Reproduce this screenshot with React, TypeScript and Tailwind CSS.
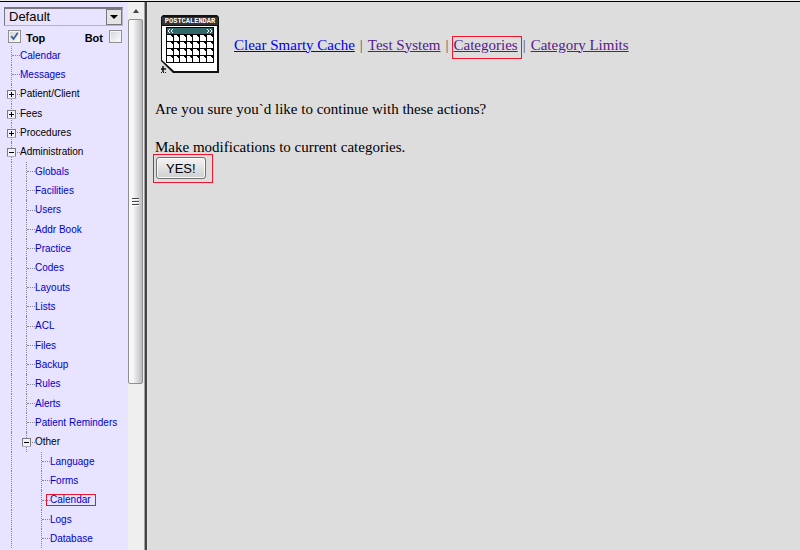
import { useState } from 'react';

type TreeItem = {
  label: string;
  level: 0 | 1 | 2;
  folder?: 'open' | 'closed';
  marked?: boolean;
};

const treeItems: TreeItem[] = [
  { label: 'Calendar', level: 0 },
  { label: 'Messages', level: 0 },
  { label: 'Patient/Client', level: 0, folder: 'closed' },
  { label: 'Fees', level: 0, folder: 'closed' },
  { label: 'Procedures', level: 0, folder: 'closed' },
  { label: 'Administration', level: 0, folder: 'open' },
  { label: 'Globals', level: 1 },
  { label: 'Facilities', level: 1 },
  { label: 'Users', level: 1 },
  { label: 'Addr Book', level: 1 },
  { label: 'Practice', level: 1 },
  { label: 'Codes', level: 1 },
  { label: 'Layouts', level: 1 },
  { label: 'Lists', level: 1 },
  { label: 'ACL', level: 1 },
  { label: 'Files', level: 1 },
  { label: 'Backup', level: 1 },
  { label: 'Rules', level: 1 },
  { label: 'Alerts', level: 1 },
  { label: 'Patient Reminders', level: 1 },
  { label: 'Other', level: 1, folder: 'open' },
  { label: 'Language', level: 2 },
  { label: 'Forms', level: 2 },
  { label: 'Calendar', level: 2, marked: true },
  { label: 'Logs', level: 2 },
  { label: 'Database', level: 2 }
];

function FolderToggle({ state, label }: { state: 'open' | 'closed'; label: string }) {
  return (
    <button type="button" aria-label={label} className="absolute -left-[5px] top-1/2 z-10 -translate-y-1/2">
      <svg width="9" height="9" viewBox="0 0 9 9" shapeRendering="crispEdges" className="block">
        <rect width="9" height="9" fill="#7b7b80" />
        <rect x="1" y="1" width="7" height="7" fill="#f3f1fb" />
        <rect x="2" y="4" width="5" height="1" fill="#000" />
        {state === 'closed' && <rect x="4" y="2" width="1" height="5" fill="#000" />}
      </svg>
    </button>
  );
}

function TreeRow({ item }: { item: TreeItem }) {
  return (
    <li className="flex h-[19px] items-stretch nth-[3n]:h-5">
      {item.level > 0 && <span className="w-[15px] border-l border-dotted border-[#85858c]" />}
      {item.level > 1 && <span className="w-[15px]" />}
      <span className="relative flex w-[9px] items-center border-l border-dotted border-[#85858c]">
        <span className="w-full border-t border-dotted border-[#85858c]" />
        {item.folder && <FolderToggle state={item.folder} label={`Toggle ${item.label}`} />}
      </span>
      {item.folder ? (
        <span className="self-center whitespace-nowrap">{item.label}</span>
      ) : (
        <a href="#" className="relative self-center whitespace-nowrap text-[#0000cc]">
          {item.label}
          {item.marked && <span className="absolute -left-1 -right-[5px] inset-y-0 border border-[#f0142c]" />}
        </a>
      )}
    </li>
  );
}

function NavCheckbox({ id, checked, onChange }: { id: string; checked: boolean; onChange: () => void }) {
  return (
    <span className="relative flex h-[13px] w-[13px]">
      <input
        id={id}
        type="checkbox"
        checked={checked}
        onChange={onChange}
        className="h-[13px] w-[13px] appearance-none border border-[#8e8f8f] bg-linear-to-br from-[#cfd3d8] to-white shadow-[inset_0_0_0_1px_#f4f4f4]"
      />
      {checked && (
        <svg width="13" height="13" viewBox="0 0 13 13" className="pointer-events-none absolute inset-0">
          <path d="M3.2 6.2 L5.5 9 L9.8 2.8" fill="none" stroke="#4a5f97" strokeWidth="1.9" />
        </svg>
      )}
    </span>
  );
}

function Sidebar() {
  const [top, setTop] = useState(true);
  const [bottom, setBottom] = useState(false);

  return (
    <aside className="min-w-0 flex-1 overflow-hidden bg-[#e8e4ff] font-['Liberation_Sans',Arial,sans-serif] text-black">
      <div className="relative ml-1 mr-[5px] mt-[5px] flex h-[19px] border border-t-2 border-[#b4b4bb] border-t-[#77777d] border-l-[#77777d]">
        <select
          aria-label="View"
          className="w-full appearance-none bg-transparent pl-1 text-[13px] leading-4 outline-none"
        >
          <option>Default</option>
        </select>
        <span className="pointer-events-none absolute inset-y-0 right-0 flex w-4 items-center justify-center border border-[#77777d] bg-[#e4e4e4]">
          <svg width="8" height="4" viewBox="0 0 8 4">
            <path d="M0 0h8L4 4z" fill="#000" />
          </svg>
        </span>
      </div>
      <div className="mt-1 flex items-start justify-between pl-2 pr-1.5 text-[11px] font-bold leading-4">
        <div className="flex gap-[5px]">
          <NavCheckbox id="show-top" checked={top} onChange={() => setTop(!top)} />
          <label htmlFor="show-top">Top</label>
        </div>
        <div className="flex flex-row-reverse gap-[6px]">
          <NavCheckbox id="show-bottom" checked={bottom} onChange={() => setBottom(!bottom)} />
          <label htmlFor="show-bottom">Bot</label>
        </div>
      </div>
      <ul className="pl-[11px] text-[10px] leading-3">
        {treeItems.map((item, index) => (
          <TreeRow key={index} item={item} />
        ))}
      </ul>
    </aside>
  );
}

function ScrollTrack() {
  return (
    <div className="flex w-4 flex-col bg-[#efeff0]">
      <div className="flex h-[17px] items-center justify-center">
        <svg width="6" height="4" viewBox="0 0 6 4">
          <path d="M3 0L6 4H0z" fill="#444" />
        </svg>
      </div>
      <div className="mr-px flex h-2/3 flex-col items-center justify-center rounded-xs border border-[#8f8f92] bg-linear-to-r from-[#f7f7f7] from-30% to-[#bdbdc1]">
        <svg width="7" height="8" viewBox="0 0 7 8" shapeRendering="crispEdges">
          <path d="M0 1.5H7M0 4.5H7M0 7.5H7" stroke="#fff" />
          <path d="M0 0.5H7M0 3.5H7M0 6.5H7" stroke="#444" />
        </svg>
      </div>
    </div>
  );
}

const calendarColumns = [
  { x: 6, width: 6 },
  { x: 13, width: 5 },
  { x: 19, width: 6 },
  { x: 26, width: 5 },
  { x: 32, width: 6 },
  { x: 39, width: 6 },
  { x: 46, width: 6 }
];
const calendarRows = [20, 27, 34, 41];

function PostCalendarIcon() {
  return (
    <svg width="58" height="58" viewBox="0 0 58 58" className="shrink-0">
      <path d="M2 0H56L58 2V58H12L0 46V2Z" fill="#111" />
      <path d="M1 11H56V56H13L1 45Z" fill="#fff" />
      <path d="M1 2H57V10H1Z" fill="#333" />
      <text
        x="29"
        y="8"
        textAnchor="middle"
        fill="#fff"
        fontSize="7"
        fontWeight="bold"
        fontFamily="'Liberation Mono', monospace"
      >
        POSTCALENDAR
      </text>
      <g shapeRendering="crispEdges">
        <rect x="5" y="12" width="48" height="36" fill="#000" />
        <rect x="6" y="13" width="46" height="6" fill="#2f6868" />
        {calendarRows.map((y) =>
          calendarColumns.map(({ x, width }) => (
            <g key={`${x}-${y}`}>
              <rect x={x} y={y} width={width} height="6" fill="#fff" />
              <rect x={x + width - 2} y={y} width="2" height="1" fill="#000" />
              <rect x={x + width - 1} y={y + 1} width="1" height="1" fill="#000" />
            </g>
          ))
        )}
      </g>
      <path
        d="M9 14L7 16L9 18M12 14L10 16L12 18M46 14L48 16L46 18M49 14L51 16L49 18"
        fill="none"
        stroke="#fff"
        strokeWidth="1"
      />
      <path d="M2 51V57M0 54H5" stroke="#111" strokeWidth="1.5" />
      <path d="M0 57.5H5" stroke="#111" strokeDasharray="1 1" />
    </svg>
  );
}

function Content() {
  return (
    <main className="min-w-0 flex-1 bg-[#dddddd] pl-[7px] pt-[13px] font-['Liberation_Serif','Times_New_Roman',serif] text-[15px] leading-[19px] text-black">
      <header className="flex items-center gap-[15px] pl-[6px]">
        <PostCalendarIcon />
        <nav className="flex gap-[5px] whitespace-nowrap pt-0.5 text-[#551a8b]">
          <a href="#" className="text-[#0000ee] underline">
            Clear Smarty Cache
          </a>
          <span className="text-[#555]">|</span>
          <a href="#" className="underline">
            Test System
          </a>
          <span className="text-[#555]">|</span>
          <a href="#" className="relative underline">
            Categories
            <span className="absolute -bottom-1 -left-0.5 -right-1 top-0 border border-[#f0142c]" />
          </a>
          <span className="text-[#555]">|</span>
          <a href="#" className="underline">
            Category Limits
          </a>
        </nav>
      </header>
      <form className="mt-[27px]" onSubmit={(event) => event.preventDefault()}>
        <p>Are you sure you`d like to continue with these actions?</p>
        <p className="mt-[19px]">Make modifications to current categories.</p>
        <div className="relative ml-px flex w-fit">
          <button
            type="submit"
            className="h-[22px] rounded-[3px] border border-[#707070] bg-linear-to-b from-[#f4f4f4] to-[#cfcfcf] px-[9px] font-['Liberation_Sans',Arial,sans-serif] text-[13px] leading-[19px] shadow-[inset_0_0_0_1px_#fafafa]"
          >
            YES!
          </button>
          <span className="pointer-events-none absolute -bottom-1 -left-[3px] -right-[7px] -top-[3px] border border-[#f0142c]" />
        </div>
      </form>
    </main>
  );
}

export default function App() {
  return (
    <div className="flex h-screen flex-col overflow-hidden bg-[#eeeeee] pt-px">
      <div className="flex min-h-0 flex-1 border-t border-black">
        <div className="flex w-36 shrink-0">
          <Sidebar />
          <ScrollTrack />
        </div>
        <div className="w-1 shrink-0 border-x border-l-[#a0a0a0] border-r-[#e4e4e4] bg-[#444]" />
        <Content />
      </div>
    </div>
  );
}
